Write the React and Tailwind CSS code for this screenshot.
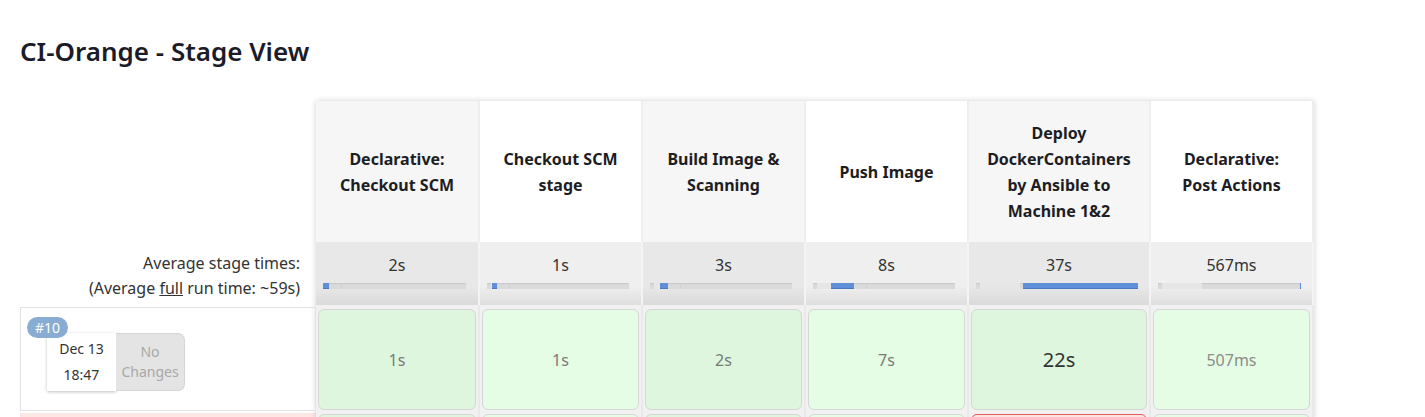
import React from "react";

const stages = [
  { name: ["Declarative:", "Checkout SCM"], avg: "2s", bar: { pre: 0, left: 0, width: 6 }, run: "1s", size: "text-base text-[#7a7a7a]" },
  { name: ["Checkout SCM", "stage"], avg: "1s", bar: { pre: 5, left: 5, width: 5 }, run: "1s", size: "text-base text-[#7a7a7a]" },
  { name: ["Build Image &", "Scanning"], avg: "3s", bar: { pre: 10, left: 10, width: 8 }, run: "2s", size: "text-base text-[#7a7a7a]" },
  { name: ["Push Image"], avg: "8s", bar: { pre: 18, left: 18, width: 23 }, run: "7s", size: "text-base text-[#7a7a7a]" },
  { name: ["Deploy", "DockerContainers", "by Ansible to", "Machine 1&2"], avg: "37s", bar: { pre: 47, left: 47, width: 115 }, run: "22s", size: "text-[20px] text-[#333]", failNext: true },
  { name: ["Declarative:", "Post Actions"], avg: "567ms", bar: { pre: 142, left: 142, width: 1 }, run: "507ms", size: "text-[16px] text-[#8c8c8c]" },
];

const cols = "grid grid-cols-[164px_163px_163px_163px_182px_163px]";

const ProgressBar = ({ bar }) => {
  const mark = bar.left + bar.width + 12;
  return (
    <div className="relative ml-[7px] mr-[12px] h-[6px] bg-[#dadada] shadow-[inset_0_1px_1px_rgba(0,0,0,0.08)]">
      <div className="absolute top-0 h-full bg-[#e6e6e6]" style={{ left: 4, width: Math.min(bar.pre, 40) }} />
      {mark < 140 && <div className="absolute top-0 h-full w-px bg-[#cfcfcf]" style={{ left: mark }} />}
      <div
        className="absolute top-0 h-full bg-[#5f8fd8] border-b border-[#4a78c2]"
        style={{ left: bar.left, width: bar.width }}
      />
    </div>
  );
};

export default function App() {
  return (
    <div className="min-h-screen bg-white px-5 text-[#333] font-['Noto_Sans',sans-serif]">
      <h1 className="pt-[35px] text-[26px] leading-8 font-semibold text-[#1b1b29]">
        CI-Orange - Stage View
      </h1>

      <div className="mt-[34px] flex items-start">
        {/* left column */}
        <div className="w-[296px] shrink-0">
          <div className="h-[141px]" />
          <div className="h-[63px] flex flex-col items-end justify-center pt-[5px] pr-[16px] text-[16px] leading-[25px] text-[#333]">
            <span>Average stage times:</span>
            <span>
              (Average <span className="underline">full</span> run time: ~59s)
            </span>
          </div>
          <div className="mt-[2px] h-[104px] border border-[#e2e2e2] relative">
            <div className="absolute left-[26px] top-[25px] flex">
              <div className="w-[69px] h-[58px] bg-white shadow-[0_1px_3px_rgba(0,0,0,0.25)] flex flex-col items-center justify-center gap-[6px] text-[14px] leading-[20px] text-[#333]">
                <span>Dec 13</span>
                <span>18:47</span>
              </div>
              <div className="w-[69px] h-[58px] bg-[#e4e4e4] border border-[#d5d5d5] border-l-0 rounded-r-[7px] flex flex-col items-center justify-center text-[14px] leading-[20px] text-[#a8a8a8]">
                <span>No</span>
                <span>Changes</span>
              </div>
            </div>
            <span className="absolute left-[6px] top-[9px] h-[21px] px-[8px] rounded-full bg-[#89acd3] text-white text-[14px] leading-[21px]">
              #10
            </span>
          </div>
          <div className="mt-[2px] h-[8px] bg-[#fde8e5]" />
        </div>

        {/* stage table */}
        <div className="shadow-[0_0_6px_rgba(0,0,0,0.18)] bg-[#ececec]">
          <div className={cols}>
            {stages.map((s, i) => (
              <div
                key={i}
                className={`h-[141px] flex flex-col items-center justify-center font-bold text-[16px] leading-[26px] text-[#1d1d24] border-r-2 border-[#eeeeee] ${
                  i % 2 === 0 ? "bg-[#f6f6f6]" : "bg-white"
                }`}
              >
                {s.name.map((line) => (
                  <span key={line}>{line}</span>
                ))}
              </div>
            ))}
          </div>

          <div className={cols}>
            {stages.map((s, i) => (
              <div
                key={i}
                className={`h-[63px] pt-[12px] border-r-2 border-[#f4f4f4] ${
                  i % 2 === 0
                    ? "bg-[linear-gradient(to_bottom,#e8e8e8_70%,#dadada)]"
                    : "bg-[linear-gradient(to_bottom,#efefef_70%,#dedede)]"
                }`}
              >
                <div className="text-center text-[16px] leading-[22px] text-[#333] mb-[7px]">{s.avg}</div>
                <ProgressBar bar={s.bar} />
              </div>
            ))}
          </div>

          <div className={`${cols} bg-[#f1f1f1]`}>
            {stages.map((s, i) => (
              <div key={i} className="px-[2px] pt-[4px] pb-[1px] border-r-2 border-[#e9e9e9]">
                <div
                  className={`h-[101px] rounded-[6px] border border-[#d6d6d6] flex items-center justify-center ${s.size} ${
                    i % 2 === 0 ? "bg-[#ddf6dd]" : "bg-[#e4fde4]"
                  }`}
                >
                  {s.run}
                </div>
              </div>
            ))}
          </div>

          <div className={`${cols} bg-[#f1f1f1] h-[8px] overflow-hidden`}>
            {stages.map((s, i) => (
              <div key={i} className="px-[2px] pt-[3px] border-r-2 border-[#e9e9e9]">
                <div
                  className={`h-[20px] rounded-[6px] border ${
                    s.failNext
                      ? "border-[#e35b5b] bg-[#fbe4e1]"
                      : `border-[#d6d6d6] ${i % 2 === 0 ? "bg-[#ddf6dd]" : "bg-[#e4fde4]"}`
                  }`}
                />
              </div>
            ))}
          </div>
        </div>
      </div>
    </div>
  );
}
